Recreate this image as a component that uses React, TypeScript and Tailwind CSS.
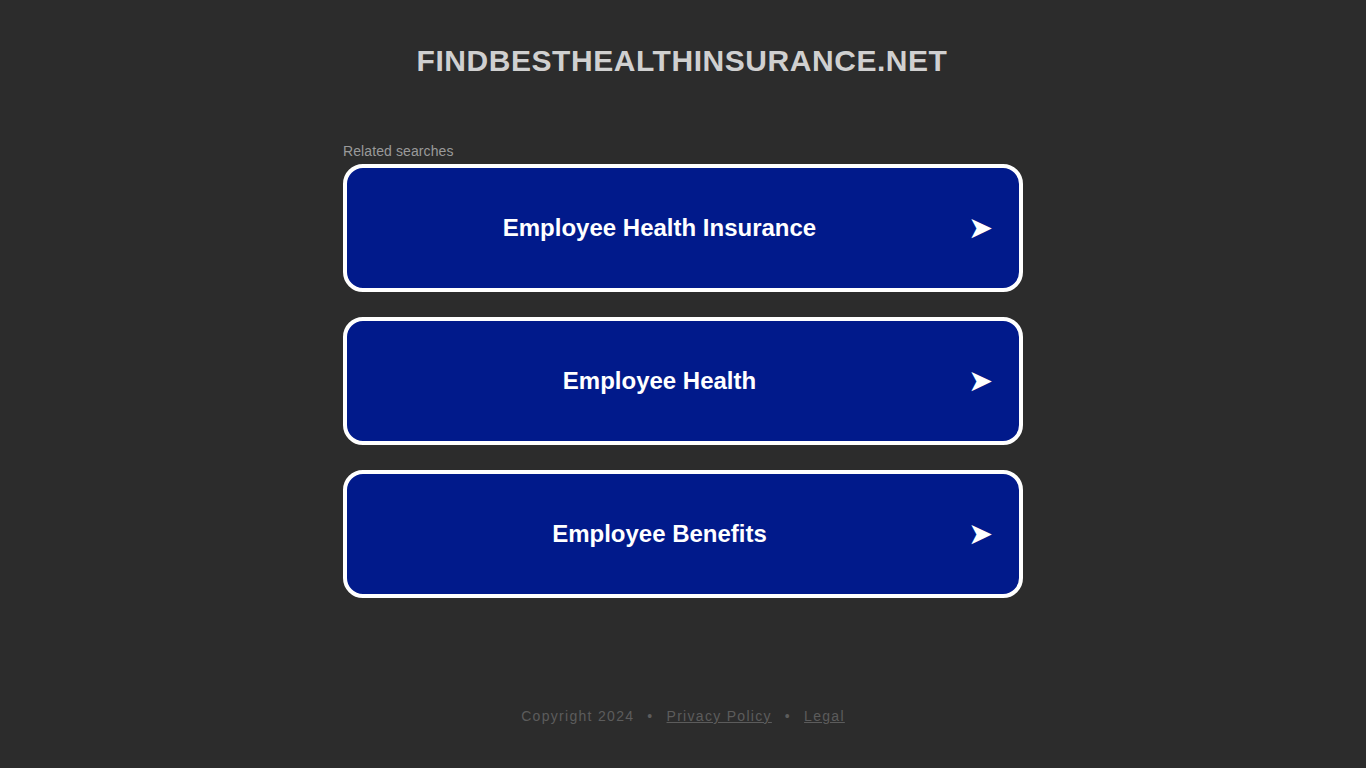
import React from 'react';

const searches = ['Employee Health Insurance', 'Employee Health', 'Employee Benefits'];

export default function App() {
    return (
        <div className="min-h-screen bg-[#2c2c2c] flex flex-col items-center font-['Liberation_Sans',Arial,sans-serif]">
            <h1 className="mt-[42px] text-[30px] leading-[38px] font-bold tracking-[0.55px] text-[#d0d0d0] pr-[2px]">
                FINDBESTHEALTHINSURANCE.NET
            </h1>

            <div className="mt-[63px] w-[680px]">
                <p className="text-[14px] leading-[16px] tracking-[0.1px] text-[#9a9a9a] mb-[5px]">Related searches</p>
                <div className="flex flex-col gap-[25px]">
                    {searches.map(s => (
                        <a
                            key={s}
                            href="#"
                            className="h-[128px] flex items-center bg-[#011a8b] border-4 border-white rounded-[20px] text-white pr-[26px]"
                        >
                            <span className="flex-1 text-center text-[24px] font-bold pl-[4px]">{s}</span>
                            <span className="text-[30px] leading-none">➤</span>
                        </a>
                    ))}
                </div>
            </div>

            <div className="mt-[108px] text-[14px] tracking-[1.3px] text-[#5c5c5c] flex items-center gap-[13px]">
                <span>Copyright 2024</span>
                <span>•</span>
                <a href="#" className="underline">Privacy Policy</a>
                <span>•</span>
                <a href="#" className="underline">Legal</a>
            </div>
        </div>
    );
}
